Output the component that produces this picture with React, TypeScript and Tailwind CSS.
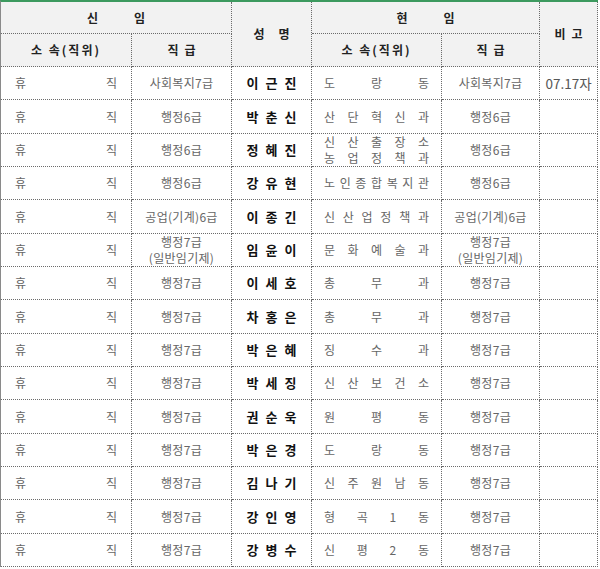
import React from "react";

type Row = {
  g1: string[];
  name: string;
  dept: string[];
  g2: string[];
  note?: string;
};

const rows: Row[] = [
  { g1: ["사회복지7급"], name: "이근진", dept: ["도랑동"], g2: ["사회복지7급"], note: "07.17자" },
  { g1: ["행정6급"], name: "박춘신", dept: ["산단혁신과"], g2: ["행정6급"] },
  { g1: ["행정6급"], name: "정혜진", dept: ["신산출장소", "농업정책과"], g2: ["행정6급"] },
  { g1: ["행정6급"], name: "강유현", dept: ["노인종합복지관"], g2: ["행정6급"] },
  { g1: ["공업(기계)6급"], name: "이종긴", dept: ["신산업정책과"], g2: ["공업(기계)6급"] },
  { g1: ["행정7급", "(일반임기제)"], name: "임윤이", dept: ["문화예술과"], g2: ["행정7급", "(일반임기제)"] },
  { g1: ["행정7급"], name: "이세호", dept: ["총무과"], g2: ["행정7급"] },
  { g1: ["행정7급"], name: "차홍은", dept: ["총무과"], g2: ["행정7급"] },
  { g1: ["행정7급"], name: "박은혜", dept: ["징수과"], g2: ["행정7급"] },
  { g1: ["행정7급"], name: "박세징", dept: ["신산보건소"], g2: ["행정7급"] },
  { g1: ["행정7급"], name: "권순욱", dept: ["원평동"], g2: ["행정7급"] },
  { g1: ["행정7급"], name: "박은경", dept: ["도랑동"], g2: ["행정7급"] },
  { g1: ["행정7급"], name: "김나기", dept: ["신주원남동"], g2: ["행정7급"] },
  { g1: ["행정7급"], name: "강인영", dept: ["형곡1동"], g2: ["행정7급"] },
  { g1: ["행정7급"], name: "강병수", dept: ["신평2동"], g2: ["행정7급"] },
];

const cell = "border-r border-b border-dotted border-[#6b6b6b] flex items-center";

function Spread({ text }: { text: string }) {
  return (
    <div className="flex w-full justify-between">
      {Array.from(text).map((c, i) => (
        <span key={i}>{c}</span>
      ))}
    </div>
  );
}

export default function App() {
  return (
    <div
      className="w-[598px] bg-white text-[12px] leading-[16px] text-[#666]"
      style={{ fontFamily: '"Noto Sans CJK KR", "Noto Sans", sans-serif' }}
    >
      <div className="grid grid-cols-[131px_100px_80px_130px_98px_58px] grid-rows-[32px_33px_repeat(15,auto)] border-t-2 border-t-[#3d9a5f] border-l border-l-[#8a8a8a]">
        {/* header row 1 */}
        <div className={`${cell} col-span-2 justify-center bg-[#f2f2f2] font-bold text-[#222] gap-[36px]`}>
          <span>신</span>
          <span>임</span>
        </div>
        <div className={`${cell} row-span-2 justify-center bg-[#f2f2f2] font-bold text-[#222] gap-[14px]`}>
          <span>성</span>
          <span>명</span>
        </div>
        <div className={`${cell} col-span-2 justify-center bg-[#f2f2f2] font-bold text-[#222] gap-[36px]`}>
          <span>현</span>
          <span>임</span>
        </div>
        <div className={`${cell} row-span-2 justify-center bg-[#f2f2f2] font-bold text-[#222] gap-[6px]`}>
          <span>비</span>
          <span>고</span>
        </div>
        {/* header row 2 */}
        <div className={`${cell} justify-center bg-[#f2f2f2] font-bold text-[#222] tracking-[2px]`}>소 속(직위)</div>
        <div className={`${cell} justify-center bg-[#f2f2f2] font-bold text-[#222] gap-[6px]`}>
          <span>직</span>
          <span>급</span>
        </div>
        <div className={`${cell} justify-center bg-[#f2f2f2] font-bold text-[#222] tracking-[2px]`}>소 속(직위)</div>
        <div className={`${cell} justify-center bg-[#f2f2f2] font-bold text-[#222] gap-[6px]`}>
          <span>직</span>
          <span>급</span>
        </div>

        {rows.map((r, i) => {
          const h = i % 3 === 1 ? "h-[34px]" : "h-[33px]";
          return (
            <React.Fragment key={i}>
              <div className={`${cell} ${h} justify-between px-[14px]`}>
                <span>휴</span>
                <span>직</span>
              </div>
              <div className={`${cell} ${h} flex-col justify-center text-center tracking-[0.3px]`}>
                {r.g1.map((t, k) => (
                  <span key={k}>{t}</span>
                ))}
              </div>
              <div className={`${cell} ${h} justify-center gap-[7px] font-bold text-[13px] text-[#111]`}>
                {Array.from(r.name).map((c, k) => (
                  <span key={k}>{c}</span>
                ))}
              </div>
              <div className={`${cell} ${h} flex-col justify-center px-[12px]`}>
                {r.dept.map((t, k) => (
                  <Spread key={k} text={t} />
                ))}
              </div>
              <div className={`${cell} ${h} flex-col justify-center text-center tracking-[0.3px]`}>
                {r.g2.map((t, k) => (
                  <span key={k}>{t}</span>
                ))}
              </div>
              <div className={`${cell} ${h} justify-center text-[13.5px] text-[#555]`}>
                {r.note ?? ""}
              </div>
            </React.Fragment>
          );
        })}
      </div>
    </div>
  );
}
